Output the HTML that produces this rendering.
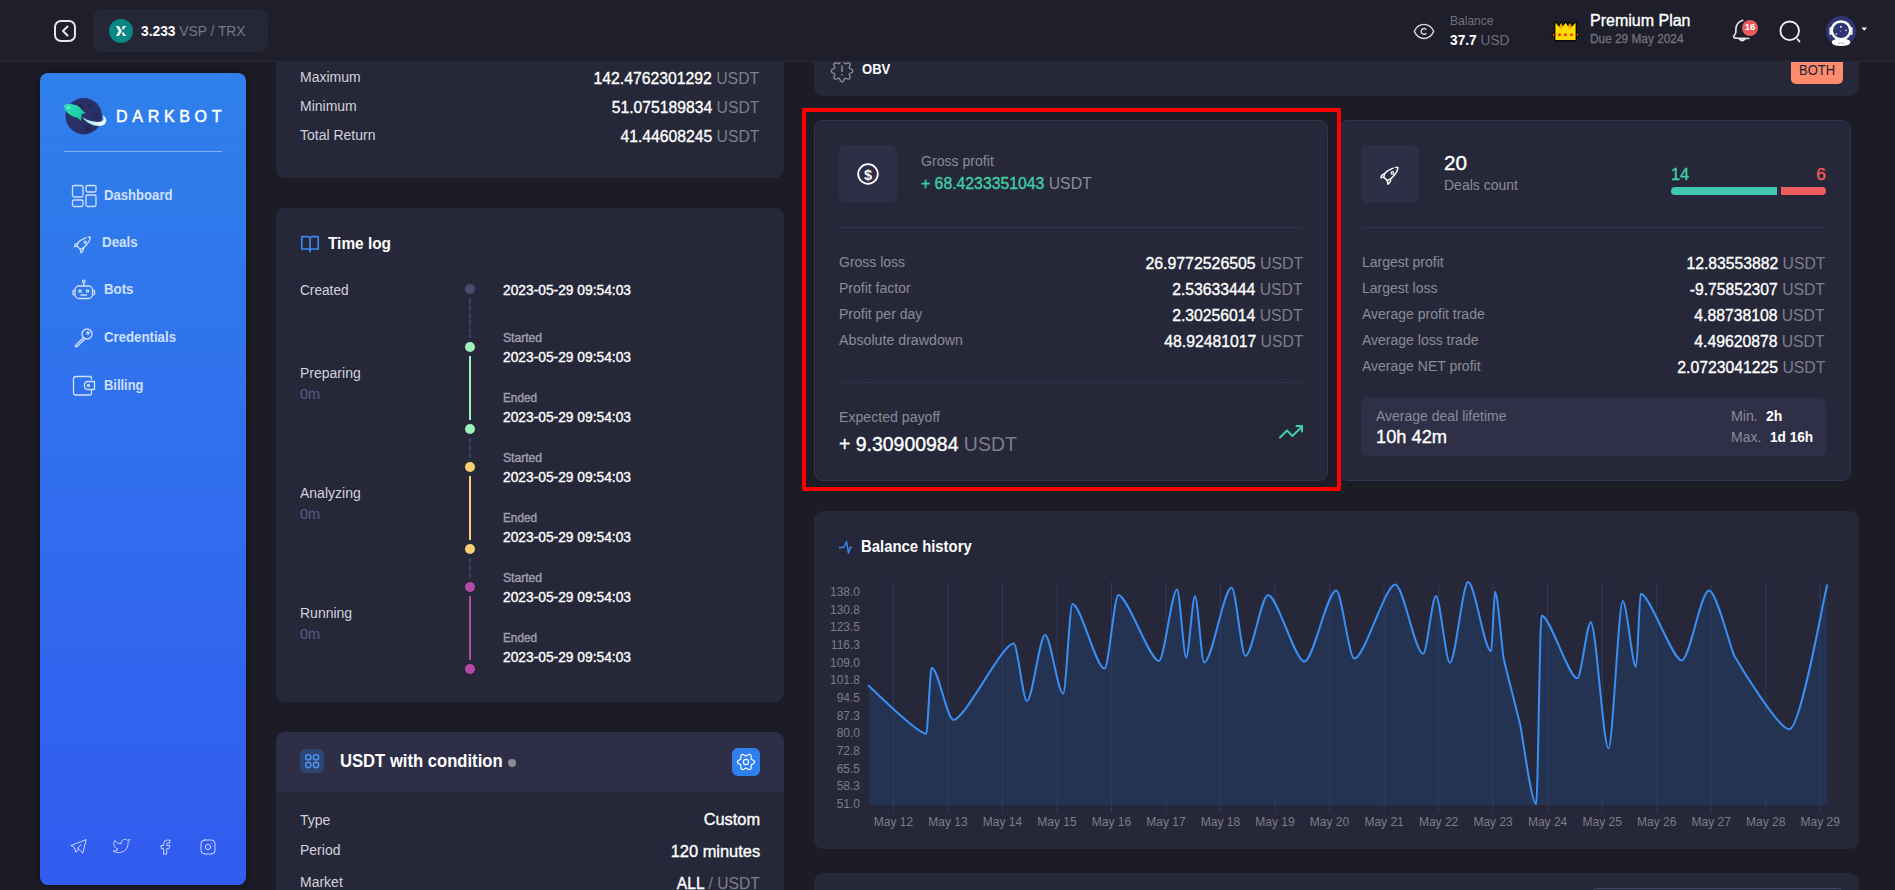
<!DOCTYPE html><html><head><meta charset="utf-8"><style>
html,body{margin:0;padding:0;width:1895px;height:890px;overflow:hidden;background:#1c1c26;font-family:'Liberation Sans', sans-serif;}
.a{position:absolute;}
.card{position:absolute;background:#262839;border-radius:9px;}
svg{position:absolute;overflow:visible;}
</style></head><body>

<!-- column 2 cards -->
<div class="card" style="left:276px;top:30px;width:508px;height:148px;"></div>
<div class="card" style="left:276px;top:208px;width:508px;height:494px;"></div>
<div class="card" style="left:276px;top:732px;width:508px;height:200px;"></div>
<div class="a" style="left:276px;top:732px;width:508px;height:60px;background:#2e2f47;border-radius:9px 9px 0 0;"></div>
<!-- col3 cards -->
<div class="card" style="left:814px;top:30px;width:1045px;height:66px;"></div>
<div class="card" style="left:1339px;top:120px;width:510px;height:359px;border:1px solid #323551;"></div>
<div class="card" style="left:814px;top:120px;width:512px;height:359px;border:1px solid #34364f;"></div>
<div class="card" style="left:814px;top:511px;width:1045px;height:338px;"></div>
<div class="card" style="left:814px;top:873px;width:1045px;height:100px;"></div>
<div class="a" style="left:1591px;top:888px;width:250px;height:40px;border:1px solid #43456a;border-radius:6px;"></div>

<!-- sidebar -->
<div class="a" style="left:40px;top:73px;width:206px;height:812px;border-radius:8px;background:linear-gradient(180deg,#2f80eb 0%,#325bf0 100%);box-shadow:0 0 8px rgba(0,0,0,0.45);"></div>
<svg style="left:0;top:0" width="1" height="1">
  <defs><linearGradient id="rk" x1="0" y1="0" x2="1" y2="1"><stop offset="0" stop-color="#2fe3bd"/><stop offset="1" stop-color="#12c197"/></linearGradient>
  <linearGradient id="sw" x1="0" y1="0" x2="1" y2="0"><stop offset="0" stop-color="#8fe3f0"/><stop offset="1" stop-color="#ffffff"/></linearGradient></defs>
  <circle cx="83.8" cy="116.2" r="18.2" fill="#2a2f68"/>
  <ellipse cx="80.5" cy="107.5" rx="2.5" ry="3.5" fill="#222757"/><ellipse cx="90.5" cy="105.5" rx="3" ry="1.6" fill="#222757"/>
  <ellipse cx="95.5" cy="116" rx="3.5" ry="3" fill="#252a5e"/><ellipse cx="87.5" cy="128" rx="3" ry="3.5" fill="#222757"/>
  <path d="M64,105.4 C67.5,103 74,103.6 79.2,106.8 L81.8,109.8 L85.6,113.3 L81.7,113.9 L80.8,120.9 L77.4,117.6 C71,116.5 64.5,112 64,105.4 Z" fill="url(#rk)"/>
  <circle cx="68.5" cy="107.5" r="0.9" fill="#c8fff0"/>
  <path d="M82,116.8 C88,121.2 95,122.3 100.2,121.8 C103.2,121.3 104.6,119.3 102.6,115.2 C106.8,117.2 107.6,122.4 103.6,125 C98.5,127.6 88,125.5 82,116.8 Z" fill="url(#sw)"/>
  <rect x="64" y="151" width="158" height="1" fill="rgba(255,255,255,0.4)"/>
</svg>
<div class="a" style="left:116px;top:109px;font:400 16px/16px 'Liberation Sans', sans-serif;color:#fff;letter-spacing:4.7px;-webkit-text-stroke:0.5px #fff;">DARKBOT</div>
<svg style="left:0;top:0" width="1" height="1" fill="none" stroke="#cfe0fb" stroke-width="1.3" stroke-linecap="round" stroke-linejoin="round">
  <rect x="72.5" y="185.5" width="10.5" height="11.5" rx="1.5"/><rect x="86" y="185.5" width="10" height="6.5" rx="1.5"/>
  <rect x="72.5" y="200" width="10.5" height="6.5" rx="1.5"/><rect x="86" y="195" width="10" height="11.5" rx="1.5"/>
  <!-- rocket -->
  <g transform="translate(74.3,236.6) scale(0.93) translate(-1380.7,-166.9)">
  <path d="M1393.2,168.2 C1389.5,169.5 1386.6,171.2 1384.6,173.6 L1383.8,177.2 L1387.2,180.6 L1391,178.6 C1395,175.2 1397.6,171.5 1397.9,167.4 L1395.4,167.4" stroke-width="1.4"/>
  <path d="M1384.6,173.6 L1381.6,175.4 L1380.9,177.8 L1383.8,177.2 M1391,178.6 L1390.2,181.8 L1387.9,184.3 L1387.2,180.6" stroke-width="1.4"/>
  <circle cx="1392.4" cy="172.9" r="1.3" stroke-width="1.2"/>
  </g>
  <!-- bot -->
  <rect x="75" y="286" width="17.5" height="12.5" rx="4"/>
  <path d="M83.75,286 L83.75,283"/><circle cx="83.75" cy="281.5" r="1.3"/>
  <circle cx="80" cy="291" r="1.2"/><circle cx="87.5" cy="291" r="1.2"/><path d="M81,295 L86.5,295"/>
  <path d="M74.5,290 L73,290.5 L73,294.5 L74.5,295 M93,290 L94.5,290.5 L94.5,294.5 L93,295"/>
  <!-- key -->
  <circle cx="87" cy="334" r="5"/><circle cx="88" cy="333" r="1"/>
  <path d="M83.5,337.5 L75,346 L76.5,347 L84.5,339.5"/>
  <!-- wallet -->
  <path d="M91.5,379 L91.5,378 C91.5,377 91,376.5 90,376.5 L76,376.5 C74.5,376.5 73.5,377.5 73.5,379 L73.5,392.5 C73.5,394 74.5,395 76,395 L90,395 C91,395 91.5,394.5 91.5,393.5 L91.5,390.5"/>
  <path d="M94.5,381.5 L87.5,381.5 C85.5,381.5 84.5,383 84.5,385.5 C84.5,388 85.5,389.5 87.5,389.5 L94.5,389.5 Z"/>
  <circle cx="88.5" cy="385.5" r="1"/>
</svg>
<svg style="left:0;top:0" width="1" height="1" fill="none" stroke="#dfe7ff" stroke-width="1" stroke-linejoin="round" stroke-linecap="round">
  <path transform="translate(68.35,836.2) scale(0.85)" stroke-width="1.05" d="M15 10l-4 4l6 6l4 -16l-18 7l4 2l2 6l3 -4"/>
  <path transform="translate(111.45,836.2) scale(0.825)" stroke-width="1.05" d="M22 4.01c-1 .49 -1.98 .689 -3 .99c-1.121 -1.265 -2.783 -1.335 -4.38 -.737s-2.643 2.06 -2.62 3.737v1c-3.245 .083 -6.135 -1.395 -8 -4c0 0 -4.182 7.433 4 11c-1.872 1.247 -3.739 2.088 -6 2c3.308 1.803 6.913 2.423 10.034 1.517c3.58 -1.04 6.522 -3.723 7.651 -7.742a13.84 13.84 0 0 0 .497 -3.753c-.002 -.249 1.51 -2.772 1.818 -4.013z"/>
  <path transform="translate(155.8,837.7) scale(0.78)" stroke-width="1.1" d="M7 10v4h3v7h4v-7h3l1 -4h-4v-2a1 1 0 0 1 1 -1h3v-4h-3a5 5 0 0 0 -5 5v2h-3"/>
  <g transform="translate(197.5,836.5) scale(0.875)" stroke-width="1.05"><rect x="4" y="4" width="16" height="16" rx="4"/><circle cx="12" cy="12" r="3"/><path d="M16.5 7.5v.01"/></g>
</svg>

<!-- OBV icon -->
<svg style="left:0;top:0" width="1" height="1">
  <path d="M852.80,71.00 L852.64,71.70 L852.17,72.34 L851.22,72.83 L850.25,73.21 L849.70,73.61 L849.39,74.06 L849.30,74.60 L849.39,75.27 L849.82,76.22 L850.14,77.25 L850.02,78.03 L849.64,78.64 L849.03,79.02 L848.25,79.14 L847.22,78.82 L846.27,78.39 L845.60,78.30 L845.06,78.39 L844.61,78.70 L844.21,79.25 L843.83,80.22 L843.34,81.17 L842.70,81.64 L842.00,81.80 L841.30,81.64 L840.66,81.17 L840.17,80.22 L839.79,79.25 L839.39,78.70 L838.94,78.39 L838.40,78.30 L837.73,78.39 L836.78,78.82 L835.75,79.14 L834.97,79.02 L834.36,78.64 L833.98,78.03 L833.86,77.25 L834.18,76.22 L834.61,75.27 L834.70,74.60 L834.61,74.06 L834.30,73.61 L833.75,73.21 L832.78,72.83 L831.83,72.34 L831.36,71.70 L831.20,71.00 L831.36,70.30 L831.83,69.66 L832.78,69.17 L833.75,68.79 L834.30,68.39 L834.61,67.94 L834.70,67.40 L834.61,66.73 L834.18,65.78 L833.86,64.75 L833.98,63.97 L834.36,63.36 L834.97,62.98 L835.75,62.86 L836.78,63.18 L837.73,63.61 L838.40,63.70 L838.94,63.61 L839.39,63.30 L839.79,62.75 L840.17,61.78 L840.66,60.83 L841.30,60.36 L842.00,60.20 L842.70,60.36 L843.34,60.83 L843.83,61.78 L844.21,62.75 L844.61,63.30 L845.06,63.61 L845.60,63.70 L846.27,63.61 L847.22,63.18 L848.25,62.86 L849.03,62.98 L849.64,63.36 L850.02,63.97 L850.14,64.75 L849.82,65.78 L849.39,66.73 L849.30,67.40 L849.39,67.94 L849.70,68.39 L850.25,68.79 L851.22,69.17 L852.17,69.66 L852.64,70.30 L852.80,71.00 Z" fill="none" stroke="#8a8a96" stroke-width="1.4" stroke-linejoin="round"/>
  <path d="M842,65.5 L842,72 M842,74 L842,75.5" stroke="#8a8a96" stroke-width="1.5"/>
</svg>
<div class="a" style="left:1791px;top:62px;width:52px;height:22px;background:#ff8a6c;border-radius:0 0 5px 5px;"></div>

<!-- gross profit icon -->
<div class="a" style="left:839px;top:145px;width:58px;height:58px;background:#2e2f47;border-radius:7px;"></div>
<svg style="left:0;top:0" width="1" height="1">
  <circle cx="868" cy="174" r="9.8" fill="none" stroke="#fff" stroke-width="1.8"/>
</svg>
<div class="a" style="left:858px;top:166.5px;width:20px;height:16px;font:700 14.5px/16px 'Liberation Sans', sans-serif;color:#fff;text-align:center;">$</div>
<div class="a" style="left:839px;top:227px;width:464px;height:1px;background:#31334a;"></div>
<div class="a" style="left:839px;top:382px;width:464px;height:0;border-top:1px dashed #34364d;"></div>
<svg style="left:0;top:0" width="1" height="1" fill="none" stroke="#3ecfa6" stroke-width="2" stroke-linecap="round" stroke-linejoin="round">
  <path d="M1280,437.5 L1287,430.5 L1292.5,436 L1302,426.5"/><path d="M1296.5,426 L1302,426 L1302,431.5"/>
</svg>

<!-- deals icon -->
<div class="a" style="left:1361px;top:145px;width:58px;height:58px;background:#2e2f47;border-radius:7px;"></div>
<svg style="left:0;top:0" width="1" height="1" fill="none" stroke="#fff" stroke-width="1.3" stroke-linecap="round" stroke-linejoin="round">
  <path d="M1393.2,168.2 C1389.5,169.5 1386.6,171.2 1384.6,173.6 L1383.8,177.2 L1387.2,180.6 L1391,178.6 C1395,175.2 1397.6,171.5 1397.9,167.4 L1395.4,167.4" stroke-width="1.4"/>
  <path d="M1384.6,173.6 L1381.6,175.4 L1380.9,177.8 L1383.8,177.2 M1391,178.6 L1390.2,181.8 L1387.9,184.3 L1387.2,180.6" stroke-width="1.4"/>
  <circle cx="1392.4" cy="172.9" r="1.3" stroke-width="1.2"/>
</svg>
<div class="a" style="left:1361px;top:227px;width:465px;height:1px;background:#31334a;"></div>
<div class="a" style="left:1671px;top:187px;width:106px;height:8px;background:#40c9b0;border-radius:4px 0 0 4px;"></div>
<div class="a" style="left:1781px;top:187px;width:45px;height:8px;background:#ec5e5e;border-radius:0 4px 4px 0;"></div>
<div class="a" style="left:1361px;top:398px;width:465px;height:58px;background:#2f3047;border-radius:6px;"></div>

<!-- red highlight -->
<div class="a" style="left:802px;top:108px;width:531px;height:375px;border:4px solid #ff0000;border-radius:2px;"></div>

<!-- time log icons & timeline -->
<svg style="left:0;top:0" width="1" height="1" fill="none" stroke="#3a86f0" stroke-width="1.6">
  <path d="M301.8,236.7 L307.5,236.7 Q310,236.7 310,238.7 Q310,236.7 312.5,236.7 L318.2,236.7 L318.2,249 L312.3,249 Q310,249 310,250.5 Q310,249 307.7,249 L301.8,249 Z M310,238.7 L310,252.2" stroke-width="1.7" stroke-linejoin="round"/>
</svg>
<svg style="left:0;top:0" width="1" height="1">
  <circle cx="470" cy="289" r="5" fill="#4a4b6d"/>
  <line x1="470" y1="298" x2="470" y2="338" stroke="#3d3f5f" stroke-width="2" stroke-dasharray="6,1.2"/>
  <circle cx="470" cy="347" r="5" fill="#9ff0b9"/><line x1="470" y1="356" x2="470" y2="420" stroke="#9ff0b9" stroke-width="2"/><circle cx="470" cy="429" r="5" fill="#9ff0b9"/>
  <line x1="470" y1="438" x2="470" y2="458" stroke="#3d3f5f" stroke-width="2" stroke-dasharray="6,1.2"/>
  <circle cx="470" cy="467" r="5" fill="#f8cf74"/><line x1="470" y1="476" x2="470" y2="540" stroke="#f8cf74" stroke-width="2"/><circle cx="470" cy="549" r="5" fill="#f8cf74"/>
  <line x1="470" y1="558" x2="470" y2="578" stroke="#3d3f5f" stroke-width="2" stroke-dasharray="6,1.2"/>
  <circle cx="470" cy="587" r="5" fill="#b44aa8"/><line x1="470" y1="596" x2="470" y2="660" stroke="#b44aa8" stroke-width="2"/><circle cx="470" cy="669" r="5" fill="#b44aa8"/>
</svg>

<!-- usdt with condition header icons -->
<div class="a" style="left:300px;top:749px;width:24px;height:24px;background:#2c4571;border-radius:5px;"></div>
<svg style="left:0;top:0" width="1" height="1" fill="none" stroke="#4f95f5" stroke-width="1.4">
  <circle cx="308.3" cy="757.3" r="2.7"/><circle cx="316" cy="757.3" r="2.7"/><circle cx="308.3" cy="765" r="2.7"/><circle cx="316" cy="765" r="2.7"/>
</svg>
<svg style="left:0;top:0" width="1" height="1"><circle cx="512" cy="763" r="4" fill="#8a8a96"/></svg>
<div class="a" style="left:732px;top:748px;width:28px;height:28px;background:#2f80ed;border-radius:6px;"></div>
<svg style="left:0;top:0" width="1" height="1" fill="none" stroke="#fff" stroke-width="1.2">
  <path d="M754.60,762.00 L754.39,762.73 L753.83,763.38 L753.05,763.89 L752.25,764.27 L751.60,764.61 L751.20,765.00 L751.06,765.54 L751.09,766.27 L751.16,767.16 L751.11,768.09 L750.83,768.90 L750.30,769.45 L749.56,769.64 L748.72,769.47 L747.89,769.05 L747.15,768.55 L746.54,768.15 L746.00,768.00 L745.46,768.15 L744.85,768.55 L744.11,769.05 L743.28,769.47 L742.44,769.64 L741.70,769.45 L741.17,768.90 L740.89,768.09 L740.84,767.16 L740.91,766.27 L740.94,765.54 L740.80,765.00 L740.40,764.61 L739.75,764.27 L738.95,763.89 L738.17,763.38 L737.61,762.73 L737.40,762.00 L737.61,761.27 L738.17,760.62 L738.95,760.11 L739.75,759.73 L740.40,759.39 L740.80,759.00 L740.94,758.46 L740.91,757.73 L740.84,756.84 L740.89,755.91 L741.17,755.10 L741.70,754.55 L742.44,754.36 L743.28,754.53 L744.11,754.95 L744.85,755.45 L745.46,755.85 L746.00,756.00 L746.54,755.85 L747.15,755.45 L747.89,754.95 L748.72,754.53 L749.56,754.36 L750.30,754.55 L750.83,755.10 L751.11,755.91 L751.16,756.84 L751.09,757.73 L751.06,758.46 L751.20,759.00 L751.60,759.39 L752.25,759.73 L753.05,760.11 L753.83,760.62 L754.39,761.27 L754.60,762.00 Z" stroke-linejoin="round"/>
  <circle cx="746" cy="762" r="2.6"/>
</svg>

<!-- balance history -->
<svg style="left:0;top:0" width="1" height="1" fill="none" stroke="#3a86f0" stroke-width="1.4" stroke-linejoin="round">
  <path d="M839,547.5 L843.7,547.5 L846.6,541.6 L848.5,553.4 L850.2,547.5 L852,547.5"/>
</svg>
<svg style="left:0;top:0" width="1" height="1">
  <rect x="868" y="582" width="959" height="223" fill="#253351" opacity="0"/>
  <path d="M868.0,685.3 C875.0,691.1 917.1,733.8 926.2,733.8 C927.8,733.8 930.0,667.7 931.6,667.7 C938.2,667.7 946.9,719.9 953.5,719.9 C965.2,719.9 1001.9,643.4 1013.6,643.4 C1017.6,643.4 1022.9,701.1 1026.9,701.1 C1032.4,701.1 1039.6,634.9 1045.1,634.9 C1050.5,634.9 1057.8,693.8 1063.2,693.8 C1066.0,693.8 1069.6,604.0 1072.4,604.0 C1081.1,604.0 1095.9,668.6 1104.6,668.6 C1108.7,668.6 1114.2,594.9 1118.3,594.9 C1127.6,594.9 1149.6,661.0 1158.9,661.0 C1164.4,661.0 1171.6,589.4 1177.1,589.4 C1179.8,589.4 1183.5,657.4 1186.2,657.4 C1188.8,657.4 1192.4,596.1 1195.0,596.1 C1197.7,596.1 1201.4,662.5 1204.1,662.5 C1212.4,662.5 1223.4,587.6 1231.7,587.6 C1235.8,587.6 1241.3,655.9 1245.4,655.9 C1252.2,655.9 1261.3,594.9 1268.1,594.9 C1277.2,594.9 1295.1,661.6 1304.2,661.6 C1313.5,661.6 1326.9,590.6 1336.2,590.6 C1341.6,590.6 1348.9,658.6 1354.3,658.6 C1364.4,658.6 1385.1,584.6 1395.2,584.6 C1403.6,584.6 1414.8,653.7 1423.2,653.7 C1427.0,653.7 1432.1,596.1 1435.9,596.1 C1440.1,596.1 1445.7,662.8 1449.9,662.8 C1455.4,662.8 1462.6,582.1 1468.1,582.1 C1475.0,582.1 1484.2,651.3 1491.1,651.3 C1492.3,651.3 1493.9,591.8 1495.1,591.8 C1497.6,591.8 1502.1,650.1 1503.6,658.0 C1505.1,666.1 1518.4,716.6 1520.2,724.7 C1522.3,734.2 1531.4,804.2 1536.2,804.2 C1537.8,804.2 1539.9,615.5 1541.5,615.5 C1550.2,615.5 1568.6,678.3 1577.3,678.3 C1581.3,678.3 1586.8,622.2 1590.8,622.2 C1596.1,622.2 1603.2,748.4 1608.5,748.4 C1612.8,748.4 1618.5,601.0 1622.8,601.0 C1626.8,601.0 1632.1,667.1 1636.1,667.1 C1637.5,667.1 1639.3,593.7 1640.7,593.7 C1650.1,593.7 1672.2,660.4 1681.6,660.4 C1689.8,660.4 1700.7,590.6 1708.9,590.6 C1716.6,590.6 1730.4,649.2 1734.7,656.5 C1740.2,665.9 1778.4,729.3 1789.3,729.3 C1800.7,729.3 1822.7,602.0 1827.3,584.6 L1827.3,805 L868.0,805 Z" fill="#253352"/>
  <line x1="893.4" y1="582" x2="893.4" y2="812" stroke="#293b65" stroke-width="1"/><line x1="947.9" y1="582" x2="947.9" y2="812" stroke="#293b65" stroke-width="1"/><line x1="1002.4" y1="582" x2="1002.4" y2="812" stroke="#293b65" stroke-width="1"/><line x1="1057.0" y1="582" x2="1057.0" y2="812" stroke="#293b65" stroke-width="1"/><line x1="1111.5" y1="582" x2="1111.5" y2="812" stroke="#293b65" stroke-width="1"/><line x1="1166.0" y1="582" x2="1166.0" y2="812" stroke="#293b65" stroke-width="1"/><line x1="1220.5" y1="582" x2="1220.5" y2="812" stroke="#293b65" stroke-width="1"/><line x1="1275.0" y1="582" x2="1275.0" y2="812" stroke="#293b65" stroke-width="1"/><line x1="1329.6" y1="582" x2="1329.6" y2="812" stroke="#293b65" stroke-width="1"/><line x1="1384.1" y1="582" x2="1384.1" y2="812" stroke="#293b65" stroke-width="1"/><line x1="1438.6" y1="582" x2="1438.6" y2="812" stroke="#293b65" stroke-width="1"/><line x1="1493.1" y1="582" x2="1493.1" y2="812" stroke="#293b65" stroke-width="1"/><line x1="1547.6" y1="582" x2="1547.6" y2="812" stroke="#293b65" stroke-width="1"/><line x1="1602.2" y1="582" x2="1602.2" y2="812" stroke="#293b65" stroke-width="1"/><line x1="1656.7" y1="582" x2="1656.7" y2="812" stroke="#293b65" stroke-width="1"/><line x1="1711.2" y1="582" x2="1711.2" y2="812" stroke="#293b65" stroke-width="1"/><line x1="1765.7" y1="582" x2="1765.7" y2="812" stroke="#293b65" stroke-width="1"/><line x1="1820.2" y1="582" x2="1820.2" y2="812" stroke="#293b65" stroke-width="1"/>
  <line x1="868.5" y1="582" x2="868.5" y2="805" stroke="#222438" stroke-width="1"/>
  <path d="M868.0,685.3 C875.0,691.1 917.1,733.8 926.2,733.8 C927.8,733.8 930.0,667.7 931.6,667.7 C938.2,667.7 946.9,719.9 953.5,719.9 C965.2,719.9 1001.9,643.4 1013.6,643.4 C1017.6,643.4 1022.9,701.1 1026.9,701.1 C1032.4,701.1 1039.6,634.9 1045.1,634.9 C1050.5,634.9 1057.8,693.8 1063.2,693.8 C1066.0,693.8 1069.6,604.0 1072.4,604.0 C1081.1,604.0 1095.9,668.6 1104.6,668.6 C1108.7,668.6 1114.2,594.9 1118.3,594.9 C1127.6,594.9 1149.6,661.0 1158.9,661.0 C1164.4,661.0 1171.6,589.4 1177.1,589.4 C1179.8,589.4 1183.5,657.4 1186.2,657.4 C1188.8,657.4 1192.4,596.1 1195.0,596.1 C1197.7,596.1 1201.4,662.5 1204.1,662.5 C1212.4,662.5 1223.4,587.6 1231.7,587.6 C1235.8,587.6 1241.3,655.9 1245.4,655.9 C1252.2,655.9 1261.3,594.9 1268.1,594.9 C1277.2,594.9 1295.1,661.6 1304.2,661.6 C1313.5,661.6 1326.9,590.6 1336.2,590.6 C1341.6,590.6 1348.9,658.6 1354.3,658.6 C1364.4,658.6 1385.1,584.6 1395.2,584.6 C1403.6,584.6 1414.8,653.7 1423.2,653.7 C1427.0,653.7 1432.1,596.1 1435.9,596.1 C1440.1,596.1 1445.7,662.8 1449.9,662.8 C1455.4,662.8 1462.6,582.1 1468.1,582.1 C1475.0,582.1 1484.2,651.3 1491.1,651.3 C1492.3,651.3 1493.9,591.8 1495.1,591.8 C1497.6,591.8 1502.1,650.1 1503.6,658.0 C1505.1,666.1 1518.4,716.6 1520.2,724.7 C1522.3,734.2 1531.4,804.2 1536.2,804.2 C1537.8,804.2 1539.9,615.5 1541.5,615.5 C1550.2,615.5 1568.6,678.3 1577.3,678.3 C1581.3,678.3 1586.8,622.2 1590.8,622.2 C1596.1,622.2 1603.2,748.4 1608.5,748.4 C1612.8,748.4 1618.5,601.0 1622.8,601.0 C1626.8,601.0 1632.1,667.1 1636.1,667.1 C1637.5,667.1 1639.3,593.7 1640.7,593.7 C1650.1,593.7 1672.2,660.4 1681.6,660.4 C1689.8,660.4 1700.7,590.6 1708.9,590.6 C1716.6,590.6 1730.4,649.2 1734.7,656.5 C1740.2,665.9 1778.4,729.3 1789.3,729.3 C1800.7,729.3 1822.7,602.0 1827.3,584.6" fill="none" stroke="#3a8ff5" stroke-width="2" stroke-linejoin="round"/>
</svg>
<!-- topbar -->
<div class="a" style="left:0;top:0;width:1895px;height:61px;background:#1f1f2b;border-bottom:1px solid #272839;"></div>
<svg style="left:0;top:0" width="1" height="1">
  <rect x="55" y="21" width="20" height="20" rx="6" fill="none" stroke="#e6e6ea" stroke-width="2"/>
  <path d="M67.5,26.5 L63,31 L67.5,35.5" fill="none" stroke="#e6e6ea" stroke-width="2" stroke-linecap="round" stroke-linejoin="round"/>
</svg>
<div class="a" style="left:93px;top:9px;width:175px;height:43px;background:#252636;border-radius:9px;"></div>
<svg style="left:0;top:0" width="1" height="1">
  <circle cx="121" cy="31" r="12" fill="#098784"/>
  <path d="M115.9,26.1 L118.9,26.1 L121.8,30.9 L118.9,35.9 L115.9,35.9 L118.8,30.9 Z M123,26.1 L126.2,26.1 L123,30 L121.9,28.2 Z M121.9,33.4 L123,31.7 L126.2,35.9 L123.2,35.9 Z" fill="#fff"/>
  <!-- eye -->
  <path d="M1414.3,31.4 C1418.5,22 1429.5,22 1433.7,31.4 C1429.5,40.8 1418.5,40.8 1414.3,31.4 Z" fill="none" stroke="#d6d6dc" stroke-width="1.4" stroke-linejoin="round"/>
  <path d="M1426.4,29.6 A2.9,2.9 0 1 0 1426.4,33.2" fill="none" stroke="#d6d6dc" stroke-width="1.4"/>
  <!-- crown -->
  <circle cx="1554.6" cy="34.7" r="1.9" fill="#ff4a1a" stroke="#0a0a0a" stroke-width="2" paint-order="stroke"/><circle cx="1576.4" cy="34.7" r="1.9" fill="#ff4a1a" stroke="#0a0a0a" stroke-width="2" paint-order="stroke"/>
  <g stroke="#0a0a0a" stroke-width="2.8" stroke-linejoin="round" fill="#0a0a0a">
    <path d="M1557.8,29.5 L1561.2,22.8 L1564.6,29.5 Z M1566.4,29.5 L1569.8,22.8 L1573.2,29.5 Z"/>
    <path d="M1555.4,22.8 L1561.2,29 L1565.5,22.8 L1569.8,29 L1575.6,22.8 L1575.6,40 L1555.4,40 Z"/>
  </g>
  <path d="M1557.8,29.5 L1561.2,22.8 L1564.6,29.5 Z M1566.4,29.5 L1569.8,22.8 L1573.2,29.5 Z" fill="#f5a300"/>
  <path d="M1555.4,22.8 L1561.2,29 L1565.5,22.8 L1569.8,29 L1575.6,22.8 L1575.6,40 L1555.4,40 Z" fill="#ffdc00"/>
  <circle cx="1559.5" cy="34.7" r="1.5" fill="#f0321a"/><circle cx="1565.5" cy="34.7" r="1.5" fill="#f0321a"/><circle cx="1571.5" cy="34.7" r="1.5" fill="#f0321a"/>
  <!-- bell -->
  <path d="M1742.8,20.3 C1738,22 1736,25 1735.9,29 L1735.8,32.5 C1735.5,34.5 1733.8,35.3 1733.6,36.4 C1733.6,37.6 1734.8,38 1736.2,38.1 L1748.9,38.5" fill="none" stroke="#e8e8ea" stroke-width="1.6" stroke-linecap="round"/>
  <path d="M1739.2,39.2 Q1742,42.6 1745.2,39.2 Z" fill="#b8b8c0" stroke="#e8e8ea" stroke-width="1.2"/>
  <circle cx="1750" cy="28" r="8" fill="#e85b5b"/>
  <!-- search -->
  <circle cx="1789.7" cy="30.8" r="9.3" fill="none" stroke="#f2f2f4" stroke-width="1.8"/>
  <path d="M1797.5,39.2 L1799.5,41.5" stroke="#f2f2f4" stroke-width="1.8" stroke-linecap="round"/>
  <!-- avatar -->
  <circle cx="1841" cy="31" r="15" fill="#2e3572"/>
  <rect x="1829.3" y="27" width="2.6" height="8" rx="1.2" fill="#d9dbe6"/><rect x="1850.1" y="27" width="2.6" height="8" rx="1.2" fill="#d9dbe6"/>
  <ellipse cx="1841" cy="30.3" rx="9.3" ry="8.9" fill="#2e3572" stroke="#fff" stroke-width="2.5"/>
  <path d="M1831.8,42 Q1832.5,38.6 1841,38.4 Q1849.5,38.6 1850.4,42 Q1850.2,45.9 1841,45.9 Q1831.8,45.9 1831.8,42 Z" fill="#fff"/>
  <path d="M1838.6,42.3 a1,1 0 1 0 1.6,0 M1841.8,42.3 a1,1 0 1 0 1.6,0" fill="none" stroke="#8a8fb8" stroke-width="0.6"/>
  <rect x="1840" y="26" width="1.6" height="1.6" fill="#fff"/><circle cx="1846" cy="30.2" r="0.8" fill="#fff"/><circle cx="1836.5" cy="34" r="0.8" fill="#fff"/><circle cx="1840.5" cy="31.5" r="0.4" fill="#fff"/>
  <path d="M1861.5,27.5 L1867,27.5 L1864.25,30.8 Z" fill="#fff"/>
</svg>
<div class="a" style="left:1742px;top:21px;width:16px;height:12px;font:700 9.5px/12px 'Liberation Sans', sans-serif;color:#fff;text-align:center;">16</div>

<div id="t0" style="position:absolute;top:24px;font-size:14px;line-height:14px;font-weight:700;color:#ffffff;white-space:nowrap;left:141px;transform:scaleX(0.9847);transform-origin:left;">3.233 <span style="-webkit-text-stroke:0;font-weight:400;color:#77778a">VSP / TRX</span></div>
<div id="t1" style="position:absolute;top:14px;font-size:13px;line-height:13px;font-weight:400;color:#6f6f7c;white-space:nowrap;left:1450px;transform:scaleX(0.9258);transform-origin:left;">Balance</div>
<div id="t2" style="position:absolute;top:33px;font-size:14px;line-height:14px;font-weight:700;color:#ffffff;white-space:nowrap;left:1450px;transform:scaleX(0.9802);transform-origin:left;">37.7 <span style="-webkit-text-stroke:0;font-weight:400;color:#6f6f7c">USD</span></div>
<div id="t3" style="position:absolute;top:13px;font-size:16px;line-height:16px;font-weight:400;color:#ffffff;-webkit-text-stroke:0.35px #ffffff;white-space:nowrap;left:1590px;">Premium Plan</div>
<div id="t4" style="position:absolute;top:33px;font-size:12px;line-height:12px;font-weight:400;color:#6f6f7c;-webkit-text-stroke:0.35px #6f6f7c;white-space:nowrap;left:1590px;transform:scaleX(0.9870);transform-origin:left;">Due 29 May 2024</div>
<div id="t5" style="position:absolute;top:188px;font-size:14px;line-height:14px;font-weight:700;color:#cfe0fb;white-space:nowrap;left:104px;transform:scaleX(0.9368);transform-origin:left;">Dashboard</div>
<div id="t6" style="position:absolute;top:235px;font-size:14px;line-height:14px;font-weight:700;color:#cfe0fb;white-space:nowrap;left:102px;transform:scaleX(0.9556);transform-origin:left;">Deals</div>
<div id="t7" style="position:absolute;top:282px;font-size:14px;line-height:14px;font-weight:700;color:#cfe0fb;white-space:nowrap;left:104px;transform:scaleX(0.9478);transform-origin:left;">Bots</div>
<div id="t8" style="position:absolute;top:330px;font-size:14px;line-height:14px;font-weight:700;color:#cfe0fb;white-space:nowrap;left:104px;transform:scaleX(0.9443);transform-origin:left;">Credentials</div>
<div id="t9" style="position:absolute;top:378px;font-size:14px;line-height:14px;font-weight:700;color:#cfe0fb;white-space:nowrap;left:104px;transform:scaleX(0.9233);transform-origin:left;">Billing</div>
<div id="t10" style="position:absolute;top:70px;font-size:14px;line-height:14px;font-weight:400;color:#d2d2dc;white-space:nowrap;left:300px;">Maximum</div>
<div id="t11" style="position:absolute;top:71px;font-size:16px;line-height:16px;font-weight:400;color:#ffffff;-webkit-text-stroke:0.35px #ffffff;white-space:nowrap;right:1136px;transform:scaleX(0.9849);transform-origin:right;">142.4762301292 <span style="-webkit-text-stroke:0;font-weight:400;color:#7e7e8a">USDT</span></div>
<div id="t12" style="position:absolute;top:99px;font-size:14px;line-height:14px;font-weight:400;color:#d2d2dc;white-space:nowrap;left:300px;">Minimum</div>
<div id="t13" style="position:absolute;top:100px;font-size:16px;line-height:16px;font-weight:400;color:#ffffff;-webkit-text-stroke:0.35px #ffffff;white-space:nowrap;right:1136px;transform:scaleX(0.9824);transform-origin:right;">51.075189834 <span style="-webkit-text-stroke:0;font-weight:400;color:#7e7e8a">USDT</span></div>
<div id="t14" style="position:absolute;top:128px;font-size:14px;line-height:14px;font-weight:400;color:#d2d2dc;white-space:nowrap;left:300px;">Total Return</div>
<div id="t15" style="position:absolute;top:129px;font-size:16px;line-height:16px;font-weight:400;color:#ffffff;-webkit-text-stroke:0.35px #ffffff;white-space:nowrap;right:1136px;transform:scaleX(0.9828);transform-origin:right;">41.44608245 <span style="-webkit-text-stroke:0;font-weight:400;color:#7e7e8a">USDT</span></div>
<div id="t16" style="position:absolute;top:236px;font-size:16px;line-height:16px;font-weight:700;color:#ffffff;white-space:nowrap;left:328px;transform:scaleX(0.9618);transform-origin:left;">Time log</div>
<div id="t17" style="position:absolute;top:283px;font-size:14px;line-height:14px;font-weight:400;color:#d2d2dc;white-space:nowrap;left:300px;transform:scaleX(0.9757);transform-origin:left;">Created</div>
<div id="t18" style="position:absolute;top:283px;font-size:14px;line-height:14px;font-weight:400;color:#ffffff;-webkit-text-stroke:0.35px #ffffff;white-space:nowrap;left:503px;transform:scaleX(0.9846);transform-origin:left;">2023-05-29 09:54:03</div>
<div id="t19" style="position:absolute;top:366px;font-size:14px;line-height:14px;font-weight:400;color:#d2d2dc;white-space:nowrap;left:300px;">Preparing</div>
<div id="t20" style="position:absolute;top:387px;font-size:14px;line-height:14px;font-weight:400;color:#565b8c;white-space:nowrap;left:300px;transform:scaleX(1.0384);transform-origin:left;">0m</div>
<div id="t21" style="position:absolute;top:332px;font-size:12px;line-height:12px;font-weight:400;color:#a3a3ad;-webkit-text-stroke:0.35px #a3a3ad;white-space:nowrap;left:503px;transform:scaleX(1.0077);transform-origin:left;">Started</div>
<div id="t22" style="position:absolute;top:350px;font-size:14px;line-height:14px;font-weight:400;color:#ffffff;-webkit-text-stroke:0.35px #ffffff;white-space:nowrap;left:503px;transform:scaleX(0.9846);transform-origin:left;">2023-05-29 09:54:03</div>
<div id="t23" style="position:absolute;top:392px;font-size:12px;line-height:12px;font-weight:400;color:#a3a3ad;-webkit-text-stroke:0.35px #a3a3ad;white-space:nowrap;left:503px;transform:scaleX(0.9797);transform-origin:left;">Ended</div>
<div id="t24" style="position:absolute;top:410px;font-size:14px;line-height:14px;font-weight:400;color:#ffffff;-webkit-text-stroke:0.35px #ffffff;white-space:nowrap;left:503px;transform:scaleX(0.9846);transform-origin:left;">2023-05-29 09:54:03</div>
<div id="t25" style="position:absolute;top:486px;font-size:14px;line-height:14px;font-weight:400;color:#d2d2dc;white-space:nowrap;left:300px;">Analyzing</div>
<div id="t26" style="position:absolute;top:507px;font-size:14px;line-height:14px;font-weight:400;color:#565b8c;white-space:nowrap;left:300px;transform:scaleX(1.0384);transform-origin:left;">0m</div>
<div id="t27" style="position:absolute;top:452px;font-size:12px;line-height:12px;font-weight:400;color:#a3a3ad;-webkit-text-stroke:0.35px #a3a3ad;white-space:nowrap;left:503px;transform:scaleX(1.0077);transform-origin:left;">Started</div>
<div id="t28" style="position:absolute;top:470px;font-size:14px;line-height:14px;font-weight:400;color:#ffffff;-webkit-text-stroke:0.35px #ffffff;white-space:nowrap;left:503px;transform:scaleX(0.9846);transform-origin:left;">2023-05-29 09:54:03</div>
<div id="t29" style="position:absolute;top:512px;font-size:12px;line-height:12px;font-weight:400;color:#a3a3ad;-webkit-text-stroke:0.35px #a3a3ad;white-space:nowrap;left:503px;transform:scaleX(0.9797);transform-origin:left;">Ended</div>
<div id="t30" style="position:absolute;top:530px;font-size:14px;line-height:14px;font-weight:400;color:#ffffff;-webkit-text-stroke:0.35px #ffffff;white-space:nowrap;left:503px;transform:scaleX(0.9846);transform-origin:left;">2023-05-29 09:54:03</div>
<div id="t31" style="position:absolute;top:606px;font-size:14px;line-height:14px;font-weight:400;color:#d2d2dc;white-space:nowrap;left:300px;">Running</div>
<div id="t32" style="position:absolute;top:627px;font-size:14px;line-height:14px;font-weight:400;color:#565b8c;white-space:nowrap;left:300px;transform:scaleX(1.0384);transform-origin:left;">0m</div>
<div id="t33" style="position:absolute;top:572px;font-size:12px;line-height:12px;font-weight:400;color:#a3a3ad;-webkit-text-stroke:0.35px #a3a3ad;white-space:nowrap;left:503px;transform:scaleX(1.0077);transform-origin:left;">Started</div>
<div id="t34" style="position:absolute;top:590px;font-size:14px;line-height:14px;font-weight:400;color:#ffffff;-webkit-text-stroke:0.35px #ffffff;white-space:nowrap;left:503px;transform:scaleX(0.9846);transform-origin:left;">2023-05-29 09:54:03</div>
<div id="t35" style="position:absolute;top:632px;font-size:12px;line-height:12px;font-weight:400;color:#a3a3ad;-webkit-text-stroke:0.35px #a3a3ad;white-space:nowrap;left:503px;transform:scaleX(0.9797);transform-origin:left;">Ended</div>
<div id="t36" style="position:absolute;top:650px;font-size:14px;line-height:14px;font-weight:400;color:#ffffff;-webkit-text-stroke:0.35px #ffffff;white-space:nowrap;left:503px;transform:scaleX(0.9846);transform-origin:left;">2023-05-29 09:54:03</div>
<div id="t37" style="position:absolute;top:752px;font-size:18px;line-height:18px;font-weight:700;color:#ffffff;white-space:nowrap;left:340px;transform:scaleX(0.9239);transform-origin:left;">USDT with condition</div>
<div id="t38" style="position:absolute;top:813px;font-size:14px;line-height:14px;font-weight:400;color:#d2d2dc;white-space:nowrap;left:300px;">Type</div>
<div id="t39" style="position:absolute;top:843px;font-size:14px;line-height:14px;font-weight:400;color:#d2d2dc;white-space:nowrap;left:300px;">Period</div>
<div id="t40" style="position:absolute;top:875px;font-size:14px;line-height:14px;font-weight:400;color:#d2d2dc;white-space:nowrap;left:300px;">Market</div>
<div id="t41" style="position:absolute;top:812px;font-size:16px;line-height:16px;font-weight:400;color:#ffffff;-webkit-text-stroke:0.35px #ffffff;white-space:nowrap;right:1135px;transform:scaleX(1.0249);transform-origin:right;">Custom</div>
<div id="t42" style="position:absolute;top:844px;font-size:16px;line-height:16px;font-weight:400;color:#ffffff;-webkit-text-stroke:0.35px #ffffff;white-space:nowrap;right:1135px;transform:scaleX(1.0267);transform-origin:right;">120 minutes</div>
<div id="t43" style="position:absolute;top:876px;font-size:16px;line-height:16px;font-weight:400;color:#ffffff;-webkit-text-stroke:0.35px #ffffff;white-space:nowrap;right:1135px;transform:scaleX(0.9790);transform-origin:right;">ALL <span style="-webkit-text-stroke:0;font-weight:400;color:#7e7e8a">/ USDT</span></div>
<div id="t44" style="position:absolute;top:62px;font-size:14px;line-height:14px;font-weight:700;color:#ffffff;white-space:nowrap;left:862px;transform:scaleX(0.9326);transform-origin:left;">OBV</div>
<div id="t45" style="position:absolute;top:63px;font-size:14px;line-height:14px;font-weight:400;color:#1b1f3b;white-space:nowrap;left:1799px;transform:scaleX(0.9282);transform-origin:left;">BOTH</div>
<div id="t46" style="position:absolute;top:154px;font-size:14px;line-height:14px;font-weight:400;color:#8b8b97;white-space:nowrap;left:921px;transform:scaleX(1.0061);transform-origin:left;">Gross profit</div>
<div id="t47" style="position:absolute;top:176px;font-size:16px;line-height:16px;font-weight:400;color:#3ecfa6;-webkit-text-stroke:0.35px #3ecfa6;white-space:nowrap;left:921px;transform:scaleX(0.9865);transform-origin:left;">+ 68.4233351043 <span style="-webkit-text-stroke:0;color:#8b8b97;font-weight:400">USDT</span></div>
<div id="t48" style="position:absolute;top:255px;font-size:14px;line-height:14px;font-weight:400;color:#8b8b97;white-space:nowrap;left:839px;">Gross loss</div>
<div id="t49" style="position:absolute;top:256px;font-size:16px;line-height:16px;font-weight:400;color:#ffffff;-webkit-text-stroke:0.35px #ffffff;white-space:nowrap;right:592px;transform:scaleX(0.9910);transform-origin:right;">26.9772526505 <span style="-webkit-text-stroke:0;font-weight:400;color:#7e7e8a">USDT</span></div>
<div id="t50" style="position:absolute;top:281px;font-size:14px;line-height:14px;font-weight:400;color:#8b8b97;white-space:nowrap;left:839px;">Profit factor</div>
<div id="t51" style="position:absolute;top:282px;font-size:16px;line-height:16px;font-weight:400;color:#ffffff;-webkit-text-stroke:0.35px #ffffff;white-space:nowrap;right:592px;transform:scaleX(0.9830);transform-origin:right;">2.53633444 <span style="-webkit-text-stroke:0;font-weight:400;color:#7e7e8a">USDT</span></div>
<div id="t52" style="position:absolute;top:307px;font-size:14px;line-height:14px;font-weight:400;color:#8b8b97;white-space:nowrap;left:839px;">Profit per day</div>
<div id="t53" style="position:absolute;top:308px;font-size:16px;line-height:16px;font-weight:400;color:#ffffff;-webkit-text-stroke:0.35px #ffffff;white-space:nowrap;right:592px;transform:scaleX(0.9830);transform-origin:right;">2.30256014 <span style="-webkit-text-stroke:0;font-weight:400;color:#7e7e8a">USDT</span></div>
<div id="t54" style="position:absolute;top:333px;font-size:14px;line-height:14px;font-weight:400;color:#8b8b97;white-space:nowrap;left:839px;transform:scaleX(1.0148);transform-origin:left;">Absolute drawdown</div>
<div id="t55" style="position:absolute;top:334px;font-size:16px;line-height:16px;font-weight:400;color:#ffffff;-webkit-text-stroke:0.35px #ffffff;white-space:nowrap;right:592px;transform:scaleX(0.9842);transform-origin:right;">48.92481017 <span style="-webkit-text-stroke:0;font-weight:400;color:#7e7e8a">USDT</span></div>
<div id="t56" style="position:absolute;top:410px;font-size:14px;line-height:14px;font-weight:400;color:#8b8b97;white-space:nowrap;left:839px;transform:scaleX(1.0084);transform-origin:left;">Expected payoff</div>
<div id="t57" style="position:absolute;top:434px;font-size:20px;line-height:20px;font-weight:400;color:#ffffff;-webkit-text-stroke:0.35px #ffffff;white-space:nowrap;left:839px;transform:scaleX(0.9720);transform-origin:left;">+ 9.30900984 <span style="-webkit-text-stroke:0;font-weight:400;color:#7e7e8a">USDT</span></div>
<div id="t58" style="position:absolute;top:153px;font-size:20px;line-height:20px;font-weight:400;color:#ffffff;-webkit-text-stroke:0.35px #ffffff;white-space:nowrap;left:1444px;transform:scaleX(1.0337);transform-origin:left;">20</div>
<div id="t59" style="position:absolute;top:178px;font-size:14px;line-height:14px;font-weight:400;color:#8b8b97;white-space:nowrap;left:1444px;">Deals count</div>
<div id="t60" style="position:absolute;top:167px;font-size:16px;line-height:16px;font-weight:400;color:#3ecfb0;-webkit-text-stroke:0.35px #3ecfb0;white-space:nowrap;left:1671px;transform:scaleX(1.0227);transform-origin:left;">14</div>
<div id="t61" style="position:absolute;top:167px;font-size:16px;line-height:16px;font-weight:400;color:#ee5c5c;-webkit-text-stroke:0.35px #ee5c5c;white-space:nowrap;right:69px;transform:scaleX(1.0779);transform-origin:right;">6</div>
<div id="t62" style="position:absolute;top:255px;font-size:14px;line-height:14px;font-weight:400;color:#8b8b97;white-space:nowrap;left:1362px;">Largest profit</div>
<div id="t63" style="position:absolute;top:256px;font-size:16px;line-height:16px;font-weight:400;color:#ffffff;-webkit-text-stroke:0.35px #ffffff;white-space:nowrap;right:70px;transform:scaleX(0.9828);transform-origin:right;">12.83553882 <span style="-webkit-text-stroke:0;font-weight:400;color:#7e7e8a">USDT</span></div>
<div id="t64" style="position:absolute;top:281px;font-size:14px;line-height:14px;font-weight:400;color:#8b8b97;white-space:nowrap;left:1362px;">Largest loss</div>
<div id="t65" style="position:absolute;top:282px;font-size:16px;line-height:16px;font-weight:400;color:#ffffff;-webkit-text-stroke:0.35px #ffffff;white-space:nowrap;right:70px;transform:scaleX(0.9806);transform-origin:right;">-9.75852307 <span style="-webkit-text-stroke:0;font-weight:400;color:#7e7e8a">USDT</span></div>
<div id="t66" style="position:absolute;top:307px;font-size:14px;line-height:14px;font-weight:400;color:#8b8b97;white-space:nowrap;left:1362px;">Average profit trade</div>
<div id="t67" style="position:absolute;top:308px;font-size:16px;line-height:16px;font-weight:400;color:#ffffff;-webkit-text-stroke:0.35px #ffffff;white-space:nowrap;right:70px;transform:scaleX(0.9823);transform-origin:right;">4.88738108 <span style="-webkit-text-stroke:0;font-weight:400;color:#7e7e8a">USDT</span></div>
<div id="t68" style="position:absolute;top:333px;font-size:14px;line-height:14px;font-weight:400;color:#8b8b97;white-space:nowrap;left:1362px;">Average loss trade</div>
<div id="t69" style="position:absolute;top:334px;font-size:16px;line-height:16px;font-weight:400;color:#ffffff;-webkit-text-stroke:0.35px #ffffff;white-space:nowrap;right:70px;transform:scaleX(0.9823);transform-origin:right;">4.49620878 <span style="-webkit-text-stroke:0;font-weight:400;color:#7e7e8a">USDT</span></div>
<div id="t70" style="position:absolute;top:359px;font-size:14px;line-height:14px;font-weight:400;color:#8b8b97;white-space:nowrap;left:1362px;">Average NET profit</div>
<div id="t71" style="position:absolute;top:360px;font-size:16px;line-height:16px;font-weight:400;color:#ffffff;-webkit-text-stroke:0.35px #ffffff;white-space:nowrap;right:70px;transform:scaleX(0.9851);transform-origin:right;">2.0723041225 <span style="-webkit-text-stroke:0;font-weight:400;color:#7e7e8a">USDT</span></div>
<div id="t72" style="position:absolute;top:409px;font-size:14px;line-height:14px;font-weight:400;color:#8b8b97;white-space:nowrap;left:1376px;">Average deal lifetime</div>
<div id="t73" style="position:absolute;top:428px;font-size:18px;line-height:18px;font-weight:400;color:#ffffff;-webkit-text-stroke:0.35px #ffffff;white-space:nowrap;left:1376px;transform:scaleX(1.0134);transform-origin:left;">10h 42m</div>
<div id="t74" style="position:absolute;top:409px;font-size:14px;line-height:14px;font-weight:400;color:#8b8b97;white-space:nowrap;left:1731px;transform:scaleX(1.0131);transform-origin:left;">Min.</div>
<div id="t75" style="position:absolute;top:409px;font-size:14px;line-height:14px;font-weight:700;color:#ffffff;white-space:nowrap;left:1766px;">2h</div>
<div id="t76" style="position:absolute;top:430px;font-size:14px;line-height:14px;font-weight:400;color:#8b8b97;white-space:nowrap;left:1731px;">Max.</div>
<div id="t77" style="position:absolute;top:430px;font-size:14px;line-height:14px;font-weight:700;color:#ffffff;white-space:nowrap;left:1770px;transform:scaleX(0.9739);transform-origin:left;">1d 16h</div>
<div id="t78" style="position:absolute;top:539px;font-size:16px;line-height:16px;font-weight:700;color:#ffffff;white-space:nowrap;left:861px;transform:scaleX(0.9290);transform-origin:left;">Balance history</div>
<div id="t79" style="position:absolute;top:586px;font-size:12px;line-height:12px;font-weight:400;color:#7d7d86;white-space:nowrap;right:1035px;">138.0</div>
<div id="t80" style="position:absolute;top:604px;font-size:12px;line-height:12px;font-weight:400;color:#7d7d86;white-space:nowrap;right:1035px;">130.8</div>
<div id="t81" style="position:absolute;top:621px;font-size:12px;line-height:12px;font-weight:400;color:#7d7d86;white-space:nowrap;right:1035px;">123.5</div>
<div id="t82" style="position:absolute;top:639px;font-size:12px;line-height:12px;font-weight:400;color:#7d7d86;white-space:nowrap;right:1035px;">116.3</div>
<div id="t83" style="position:absolute;top:657px;font-size:12px;line-height:12px;font-weight:400;color:#7d7d86;white-space:nowrap;right:1035px;">109.0</div>
<div id="t84" style="position:absolute;top:674px;font-size:12px;line-height:12px;font-weight:400;color:#7d7d86;white-space:nowrap;right:1035px;">101.8</div>
<div id="t85" style="position:absolute;top:692px;font-size:12px;line-height:12px;font-weight:400;color:#7d7d86;white-space:nowrap;right:1035px;">94.5</div>
<div id="t86" style="position:absolute;top:710px;font-size:12px;line-height:12px;font-weight:400;color:#7d7d86;white-space:nowrap;right:1035px;">87.3</div>
<div id="t87" style="position:absolute;top:727px;font-size:12px;line-height:12px;font-weight:400;color:#7d7d86;white-space:nowrap;right:1035px;">80.0</div>
<div id="t88" style="position:absolute;top:745px;font-size:12px;line-height:12px;font-weight:400;color:#7d7d86;white-space:nowrap;right:1035px;">72.8</div>
<div id="t89" style="position:absolute;top:763px;font-size:12px;line-height:12px;font-weight:400;color:#7d7d86;white-space:nowrap;right:1035px;">65.5</div>
<div id="t90" style="position:absolute;top:780px;font-size:12px;line-height:12px;font-weight:400;color:#7d7d86;white-space:nowrap;right:1035px;">58.3</div>
<div id="t91" style="position:absolute;top:798px;font-size:12px;line-height:12px;font-weight:400;color:#7d7d86;white-space:nowrap;right:1035px;">51.0</div>
<div id="t92" style="position:absolute;top:816px;font-size:12px;line-height:12px;font-weight:400;color:#7d7d86;white-space:nowrap;left:893.4px;transform:translateX(-50%) ;transform-origin:center;">May 12</div>
<div id="t93" style="position:absolute;top:816px;font-size:12px;line-height:12px;font-weight:400;color:#7d7d86;white-space:nowrap;left:947.92px;transform:translateX(-50%) ;transform-origin:center;">May 13</div>
<div id="t94" style="position:absolute;top:816px;font-size:12px;line-height:12px;font-weight:400;color:#7d7d86;white-space:nowrap;left:1002.4399999999999px;transform:translateX(-50%) ;transform-origin:center;">May 14</div>
<div id="t95" style="position:absolute;top:816px;font-size:12px;line-height:12px;font-weight:400;color:#7d7d86;white-space:nowrap;left:1056.96px;transform:translateX(-50%) ;transform-origin:center;">May 15</div>
<div id="t96" style="position:absolute;top:816px;font-size:12px;line-height:12px;font-weight:400;color:#7d7d86;white-space:nowrap;left:1111.48px;transform:translateX(-50%) ;transform-origin:center;">May 16</div>
<div id="t97" style="position:absolute;top:816px;font-size:12px;line-height:12px;font-weight:400;color:#7d7d86;white-space:nowrap;left:1166.0px;transform:translateX(-50%) ;transform-origin:center;">May 17</div>
<div id="t98" style="position:absolute;top:816px;font-size:12px;line-height:12px;font-weight:400;color:#7d7d86;white-space:nowrap;left:1220.52px;transform:translateX(-50%) ;transform-origin:center;">May 18</div>
<div id="t99" style="position:absolute;top:816px;font-size:12px;line-height:12px;font-weight:400;color:#7d7d86;white-space:nowrap;left:1275.04px;transform:translateX(-50%) ;transform-origin:center;">May 19</div>
<div id="t100" style="position:absolute;top:816px;font-size:12px;line-height:12px;font-weight:400;color:#7d7d86;white-space:nowrap;left:1329.56px;transform:translateX(-50%) ;transform-origin:center;">May 20</div>
<div id="t101" style="position:absolute;top:816px;font-size:12px;line-height:12px;font-weight:400;color:#7d7d86;white-space:nowrap;left:1384.08px;transform:translateX(-50%) ;transform-origin:center;">May 21</div>
<div id="t102" style="position:absolute;top:816px;font-size:12px;line-height:12px;font-weight:400;color:#7d7d86;white-space:nowrap;left:1438.6px;transform:translateX(-50%) ;transform-origin:center;">May 22</div>
<div id="t103" style="position:absolute;top:816px;font-size:12px;line-height:12px;font-weight:400;color:#7d7d86;white-space:nowrap;left:1493.12px;transform:translateX(-50%) ;transform-origin:center;">May 23</div>
<div id="t104" style="position:absolute;top:816px;font-size:12px;line-height:12px;font-weight:400;color:#7d7d86;white-space:nowrap;left:1547.6399999999999px;transform:translateX(-50%) ;transform-origin:center;">May 24</div>
<div id="t105" style="position:absolute;top:816px;font-size:12px;line-height:12px;font-weight:400;color:#7d7d86;white-space:nowrap;left:1602.1599999999999px;transform:translateX(-50%) ;transform-origin:center;">May 25</div>
<div id="t106" style="position:absolute;top:816px;font-size:12px;line-height:12px;font-weight:400;color:#7d7d86;white-space:nowrap;left:1656.68px;transform:translateX(-50%) ;transform-origin:center;">May 26</div>
<div id="t107" style="position:absolute;top:816px;font-size:12px;line-height:12px;font-weight:400;color:#7d7d86;white-space:nowrap;left:1711.2px;transform:translateX(-50%) ;transform-origin:center;">May 27</div>
<div id="t108" style="position:absolute;top:816px;font-size:12px;line-height:12px;font-weight:400;color:#7d7d86;white-space:nowrap;left:1765.72px;transform:translateX(-50%) ;transform-origin:center;">May 28</div>
<div id="t109" style="position:absolute;top:816px;font-size:12px;line-height:12px;font-weight:400;color:#7d7d86;white-space:nowrap;left:1820.24px;transform:translateX(-50%) ;transform-origin:center;">May 29</div></body></html>
